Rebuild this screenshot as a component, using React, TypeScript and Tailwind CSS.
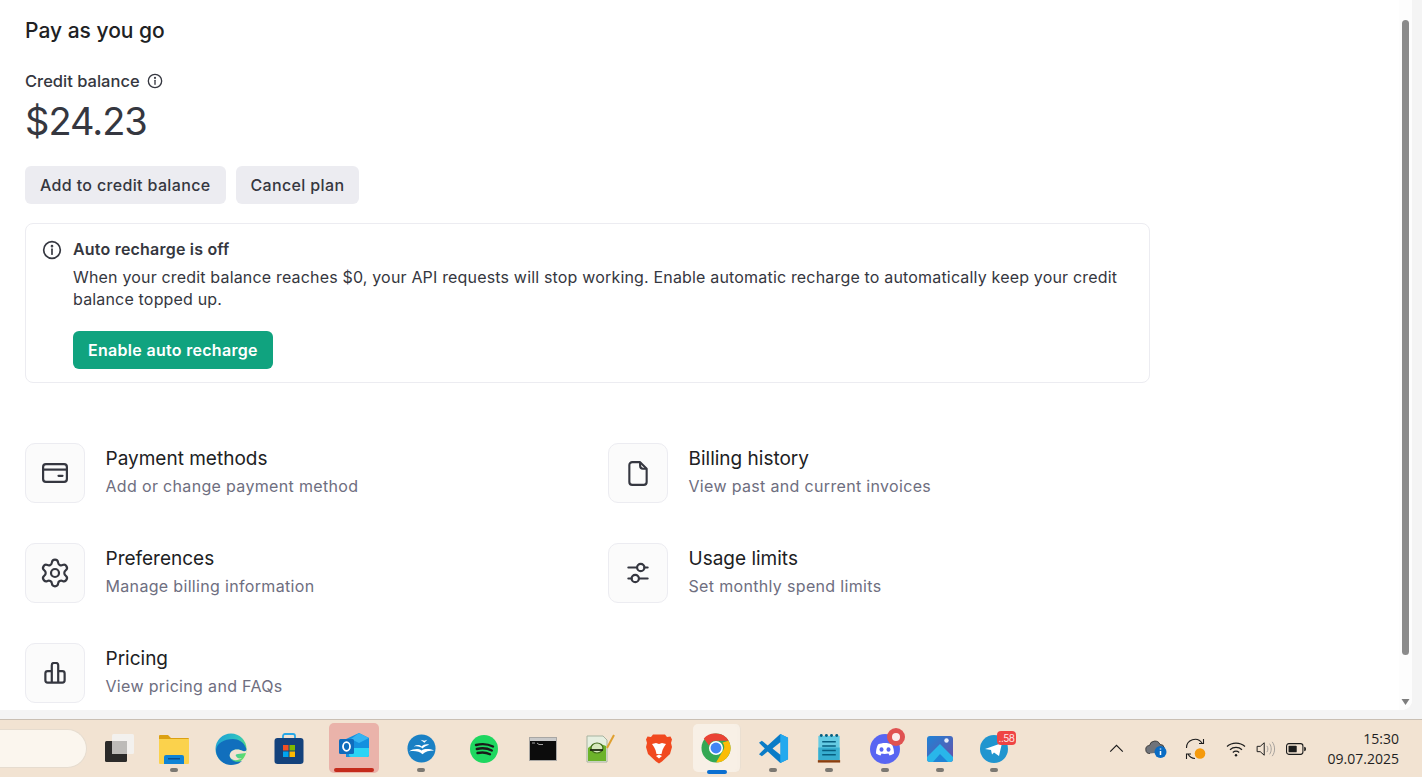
import type { ReactNode } from 'react'
import { Settings } from 'lucide-react'

const InfoIcon = ({ className }: { className: string }) => (
  <svg viewBox="0 0 24 24" fill="none" stroke="currentColor" strokeWidth="2" strokeLinecap="round" className={className}>
    <circle cx="12" cy="12" r="10" />
    <path d="M12 11v6" />
    <circle cx="12" cy="7.4" r="0.6" fill="currentColor" />
  </svg>
)

const CardIcon = () => (
  <svg viewBox="0 0 26 20" fill="none" stroke="#353740" strokeWidth="2.2" className="w-[26px] h-[20px]">
    <rect x="1.1" y="1.1" width="23.8" height="17.8" rx="2.8" />
    <path d="M1.1 6.6h23.8" />
    <path d="M16.5 12.8h4" strokeLinecap="round" />
  </svg>
)

const FileIcon = () => (
  <svg viewBox="0 0 20 26" fill="none" stroke="#353740" strokeWidth="2.2" strokeLinejoin="round" className="w-[20px] h-[25px]">
    <path d="M4 1.2h8.2L19 8v13.800a3 3 0 0 1-3 3H4a3 3 0 0 1-3-3V4.200a3 3 0 0 1 3-3z" />
    <path d="M12.200 1.200V5a3 3 0 0 0 3 3H19" />
  </svg>
)

const SlidersIcon = () => (
  <svg viewBox="0 0 24 24" fill="none" stroke="#353740" strokeWidth="2.4" strokeLinecap="round" className="w-[22px] h-[22px]">
    <path d="M1.500 6h9M19 6h3.500M1.500 18h3.500M13.500 18h9" />
    <circle cx="15" cy="6" r="4" />
    <circle cx="9" cy="18" r="4" />
  </svg>
)

const ChartIcon = () => (
  <svg viewBox="0 0 24 24" fill="none" stroke="#353740" strokeWidth="2.4" strokeLinejoin="round" className="w-[22px] h-[22px]">
    <path d="M8.500 22.500V3.500a2.500 2.500 0 0 1 2.500-2.500h2a2.500 2.500 0 0 1 2.500 2.500v19" />
    <path d="M8.500 10H4a2.500 2.500 0 0 0-2.500 2.500v7.500a2.500 2.500 0 0 0 2.500 2.500h16a2.500 2.500 0 0 0 2.500-2.500v-7.500a2.500 2.500 0 0 0-2.500-2.500h-4.500" />
  </svg>
)

function LinkItem({ icon, title, desc }: { icon: ReactNode; title: string; desc: string }) {
  return (
    <div className="flex items-center h-[60px]">
      <div className="w-[60px] h-[60px] shrink-0 flex items-center justify-center rounded-[10px] border border-[#ececf1] bg-[#fbfbfb]">
        {icon}
      </div>
      <div className="ml-[20.5px] mb-[2px]">
        <div className="text-[19px] leading-[28px] text-[#202123]">{title}</div>
        <div className="text-[16px] leading-[26px] tracking-[0.33px] text-[#6e6e80]">{desc}</div>
      </div>
    </div>
  )
}

const Dot = () => <span className="absolute left-1/2 -translate-x-1/2 bottom-[1px] w-[8px] h-[4px] rounded-full bg-[#7b7872]" />

function Slot({ className, dot, children }: { className: string; dot?: boolean; children: ReactNode }) {
  return (
    <div className={`relative h-[48px] w-[44px] shrink-0 flex items-center justify-center ${className}`}>
      {children}
      {dot && <Dot />}
    </div>
  )
}

function Taskbar() {
  return (
    <div className="h-[58px] shrink-0 border-t border-[#c9bfb3] bg-[#f2e3d2] flex items-center relative">
      <div className="w-[87px] h-[39px] shrink-0 rounded-r-[20px] bg-[#fbf6ee] border border-l-0 border-[#e6dccf] mt-[-1px]" />
      <Slot className="ml-[9px]">
        <svg viewBox="0 0 32 32" className="w-[32px] h-[32px]">
          <rect x="3" y="8" width="22" height="21" rx="1.500" fill="#2b2a29" />
          <rect x="10" y="1" width="22" height="20" rx="1.500" fill="#f3f1ee" />
          <rect x="10" y="8" width="15" height="13" fill="#bdbbb8" />
        </svg>
      </Slot>
      <Slot className="ml-[12px]" dot>
        <svg viewBox="0 0 32 32" className="w-[32px] h-[32px]">
          <path d="M1 3a1 1 0 0 1 1-1h8l3 3h17a1 1 0 0 1 1 1v3H1z" fill="#dca012" />
          <path d="M1 6h30v24a1 1 0 0 1-1 1H2a1 1 0 0 1-1-1z" fill="#fbd24c" />
          <path d="M6 31v-7a2 2 0 0 1 2-2h16a2 2 0 0 1 2 2v7z" fill="#0f84d6" />
          <rect x="10" y="25" width="12" height="1.500" fill="#0a4f8f" />
        </svg>
      </Slot>
      <Slot className="ml-[13px]">
        <svg viewBox="0 0 32 32" className="w-[32px] h-[32px]">
          <defs>
            <linearGradient id="edgeA" x1="0" y1="0" x2="1" y2="0.6">
              <stop offset="0" stopColor="#1b9bd8" />
              <stop offset="0.6" stopColor="#2fc3c0" />
              <stop offset="1" stopColor="#5fdc6a" />
            </linearGradient>
          </defs>
          <circle cx="16" cy="16" r="15.500" fill="url(#edgeA)" />
          <path d="M1 17c0 8 7 15 15 15 4 0 8-1 11-4-5 2-11 0-12-4-1-3 1-6 4-7 3-1 7 0 9 1 3 1 4-1 3-3-2-6-8-9-13-9C9 6 2 10 1 17z" fill="#116fbd" />
          <path d="M15 24c-1-3 1-6 4-7 3-1 7 0 9 1 3 1 4-1 3-3 .5 2 .5 3 0 5l-8 1c-2 0-3 1-2 2 1 2 3 3 6 2-4 3-10 3-12-1z" fill="#f2e3d2" />
        </svg>
      </Slot>
      <Slot className="ml-[14px]">
        <svg viewBox="0 0 30 32" className="w-[30px] h-[32px]">
          <path d="M9 8V3a2 2 0 0 1 2-2h8a2 2 0 0 1 2 2v5" fill="none" stroke="#28a8e8" strokeWidth="1.800" />
          <rect x="0.500" y="5" width="29" height="26" rx="3" fill="#14427c" />
          <rect x="9" y="12" width="5.500" height="5.500" fill="#f25022" />
          <rect x="15.500" y="12" width="5.500" height="5.500" fill="#7fba00" />
          <rect x="9" y="18.500" width="5.500" height="5.500" fill="#00a4ef" />
          <rect x="15.500" y="18.500" width="5.500" height="5.500" fill="#ffb900" />
        </svg>
      </Slot>
      <div className="ml-[18px] w-[50px] h-[50px] shrink-0 rounded-[5px] bg-[#eab3aa] relative flex items-center justify-center mt-[-1px]">
        <svg viewBox="0 0 32 32" className="w-[32px] h-[32px] mt-[-3px]">
          <path d="M8 8l13-6 10 5v17a2 2 0 0 1-2 2H8z" fill="#1490df" />
          <path d="M21 2l10 5-10 5-8-4z" fill="#36b3f0" />
          <path d="M11 17h20v7a2 2 0 0 1-2 2H13a2 2 0 0 1-2-2z" fill="#2bd4f5" />
          <rect x="1" y="8" width="15" height="15" rx="1.500" fill="#0f6cbd" />
          <ellipse cx="8.500" cy="15.500" rx="3.500" ry="4.300" fill="none" stroke="#ffffff" strokeWidth="1.800" />
        </svg>
        <span className="absolute left-[5px] right-[5px] bottom-[1px] h-[4px] rounded-full bg-[#c42b1c]" />
      </div>
      <Slot className="ml-[20px]" dot>
        <svg viewBox="0 0 30 30" className="w-[29px] h-[29px]">
          <circle cx="15" cy="15" r="14.500" fill="#1a80c4" />
          <path d="M2 18c5-3 10-3 13-1 3-2 8-2 13 0-5 0-9 1-12 4-3-3-8-4-14-3zM7 13c3-2 6-2 8 0 2-2 5-3 8-2-3 1-5 2-7 4-2-2-5-3-9-2zM14 6l4 1 3-1-3 3z" fill="#ffffff" />
        </svg>
      </Slot>
      <Slot className="ml-[19px]">
        <svg viewBox="0 0 28 28" className="w-[28px] h-[28px]">
          <circle cx="14" cy="14" r="14" fill="#1ed760" />
          <path d="M6 10c6-1.500 12-1 17 1.500M6.800 14c5-1.200 10.500-.8 15 1.500M7.500 18c4.500-1 9-.6 12.500 1.200" fill="none" stroke="#1a1a1a" strokeWidth="2.400" strokeLinecap="round" />
        </svg>
      </Slot>
      <Slot className="ml-[15px]">
        <svg viewBox="0 0 28 24" className="w-[28px] h-[24px]">
          <rect x="0.500" y="0.500" width="27" height="23" fill="#0c0c0c" stroke="#a9a7a4" />
          <rect x="1" y="1" width="26" height="3" fill="#c9c9c9" />
          <path d="M3 6h3M8 6l2 1.500H14" stroke="#c8c8c8" strokeWidth="0.800" fill="none" />
        </svg>
      </Slot>
      <Slot className="ml-[13px]">
        <svg viewBox="0 0 30 30" className="w-[30px] h-[30px]">
          <path d="M2 2h16l4 4v22H2z" fill="#e6efe0" stroke="#a7b3a0" />
          <path d="M3 14c4-4 12-5 18-2v15H3z" fill="#6cb32a" />
          <ellipse cx="12" cy="14" rx="6" ry="5" fill="#d5e8bd" stroke="#3f6a1a" strokeWidth="1.200" />
          <path d="M5 16h13" stroke="#1c2a10" strokeWidth="1.800" />
          <path d="M22 14L29 1" stroke="#e0a030" strokeWidth="2" />
        </svg>
      </Slot>
      <Slot className="ml-[15px]">
        <svg viewBox="0 0 26 30" className="w-[26px] h-[30px]">
          <path d="M7 0.500h12l2 2.500 3.500-.5 1.500 3-1 3.500 1 4-2 7-8 7.500-3 2-3-2-8-7.500-2-7 1-4-1-3.500 1.500-3 3.500.5z" fill="#f1491f" />
          <path d="M6 10l4-1 3 1 3-1 4 1-2 3-1.500 3-1 4h-5l-1-4-1.500-3zM10 22l3-1.500 3 1.500-3 2.500z" fill="#ffffff" />
        </svg>
      </Slot>
      <div className="ml-[12px] relative w-[44px] h-[48px] shrink-0 mt-[-1px]">
        <div className="absolute left-[38px] top-0 w-[10px] h-[48px] rounded-r-[5px] bg-[#f7efe5] border-r border-[#eadfd1]" />
        <div className="absolute inset-0 rounded-[5px] bg-[#f8f0e6] flex items-center justify-center">
          <svg viewBox="0 0 32 32" className="w-[30px] h-[30px] ml-[2px]">
            <circle cx="16" cy="16" r="15.500" fill="#34a853" />
            <path d="M16 .5a15.500 15.500 0 0 1 13.400 7.700H16a8 8 0 0 0-7.500 5L3 5.800A15.500 15.500 0 0 1 16 .5z" fill="#ea4335" />
            <path d="M29.400 8.200A15.500 15.500 0 0 1 16 31.500l6.700-11.600A8 8 0 0 0 23 10l6.400-1.800z" fill="#fbbc05" />
            <circle cx="16" cy="16" r="7.500" fill="#ffffff" />
            <circle cx="16" cy="16" r="5.800" fill="#4285f4" />
          </svg>
        </div>
        <span className="absolute left-[14px] bottom-[-2px] w-[20px] h-[4px] rounded-full bg-[#0b6fd0]" />
      </div>
      <Slot className="ml-[14px]" dot>
        <svg viewBox="0 0 32 32" className="w-[31px] h-[31px]">
          <path d="M23 1l8 4v22l-8 4-13-12-6 5-3-2 6-6-6-6 3-2 6 5z" fill="#0a7cc7" />
          <path d="M23 1l8 4v22l-8 4z" fill="#24a9ee" />
          <path d="M23 9.500v13l-8-6.500z" fill="#f2e3d2" />
        </svg>
      </Slot>
      <Slot className="ml-[12px]" dot>
        <svg viewBox="0 0 24 32" className="w-[24px] h-[31px]">
          <rect x="1" y="3" width="22" height="25" fill="#65cbe3" />
          <rect x="1" y="15" width="22" height="13" fill="#37aed0" />
          <rect x="0.500" y="28" width="23" height="2.500" fill="#8a3f0f" />
          <path d="M5 9h14M5 13.500h14M5 18h14M5 22.500h14" stroke="#075f80" strokeWidth="1.600" />
          <circle cx="4" cy="2.500" r="1.500" fill="#075f80" />
          <circle cx="9.300" cy="2.500" r="1.500" fill="#075f80" />
          <circle cx="14.600" cy="2.500" r="1.500" fill="#075f80" />
          <circle cx="20" cy="2.500" r="1.500" fill="#075f80" />
        </svg>
      </Slot>
      <Slot className="ml-[12px]" dot>
        <svg viewBox="0 0 30 30" className="w-[30px] h-[30px]">
          <circle cx="15" cy="15" r="15" fill="#5865f2" />
          <path d="M8 10.500c4-2 10-2 14 0 1.500 3 2 6 2 9-1.500 1-3 1.700-4.500 2l-1-2c-2.500.6-5.500.6-7 0l-1 2c-1.500-.3-3-1-4.500-2 0-3 .5-6 2-9z" fill="#ffffff" />
          <ellipse cx="11.500" cy="15.500" rx="2" ry="2.300" fill="#5865f2" />
          <ellipse cx="18.500" cy="15.500" rx="2" ry="2.300" fill="#5865f2" />
        </svg>
        <span className="absolute left-[24px] top-[3px] w-[18px] h-[18px] rounded-full bg-[#e05252] flex items-center justify-center">
          <span className="w-[8px] h-[8px] rounded-full bg-[#fbeeee]" />
        </span>
      </Slot>
      <Slot className="ml-[11px]" dot>
        <svg viewBox="0 0 26 26" className="w-[26px] h-[26px]">
          <defs>
            <linearGradient id="photoBg" x1="0" y1="0" x2="1" y2="1">
              <stop offset="0" stopColor="#1f83d6" />
              <stop offset="1" stopColor="#6a4fa8" />
            </linearGradient>
          </defs>
          <rect width="26" height="26" rx="3" fill="url(#photoBg)" />
          <path d="M0 21l13-13 13 13v2a3 3 0 0 1-3 3H3a3 3 0 0 1-3-3z" fill="#29b6ea" />
          <path d="M6 26l7-8 8 8z" fill="#1f83d6" />
          <circle cx="19.500" cy="4.500" r="2.200" fill="#e8eef8" />
        </svg>
      </Slot>
      <Slot className="ml-[10px]" dot>
        <svg viewBox="0 0 28 28" className="w-[28px] h-[28px]">
          <circle cx="14" cy="14" r="14" fill="#2095cf" />
          <path d="M5 14l17-6-3 13-5-3.500-2 2-1-4.500z" fill="#ffffff" />
        </svg>
        <span className="absolute left-[25px] top-[6px] w-[19px] h-[14px] rounded-[4px] bg-[#ef4444] text-center text-[#fde8e8] text-[10px] leading-[14px] tracking-[-0.5px] font-['Inter',sans-serif]">..58</span>
      </Slot>

      {/* system tray */}
      <div className="ml-auto flex items-center pr-[23px] text-[#1c1c1c]">
        <svg viewBox="0 0 16 10" fill="none" stroke="#1c1c1c" strokeWidth="1.300" className="w-[15px] h-[9px]">
          <path d="M1 8.500L8 1.500l7 7" />
        </svg>
        <svg viewBox="0 0 22 20" className="ml-[21px] w-[22px] h-[20px]">
          <path d="M5 14.500a4 4 0 0 1-.5-8A5.500 5.500 0 0 1 15 5.500a4 4 0 0 1 1.500 7.800" fill="#6f737a" stroke="#2c2c2c" strokeWidth="0.800" />
          <circle cx="15.500" cy="13" r="6" fill="#0a6cc4" />
          <path d="M15.500 12v4M15.500 9.500v1" stroke="#fff" strokeWidth="1.500" />
        </svg>
        <svg viewBox="0 0 22 22" className="ml-[18px] w-[22px] h-[22px]" fill="none" stroke="#1c1c1c" strokeWidth="1.100">
          <path d="M1.500 10A8.500 8.500 0 0 1 17 5M18.500 1v4.500H14" />
          <path d="M10 20.500A8.500 8.500 0 0 1 3 16M1.500 21v-5H6" />
          <circle cx="15" cy="15.500" r="5.300" fill="#f59a0c" stroke="none" />
        </svg>
        <svg viewBox="0 0 20 16" fill="none" stroke="#1c1c1c" strokeWidth="1.200" className="ml-[19px] w-[20px] h-[16px]">
          <path d="M1 5.500c5-4.500 13-4.500 18 0M4 8.700c3.300-3 8.700-3 12 0M6.800 11.500c1.800-1.500 4.600-1.500 6.400 0" />
          <circle cx="10" cy="14.200" r="1.200" fill="#1c1c1c" stroke="none" />
        </svg>
        <svg viewBox="0 0 22 18" fill="none" strokeWidth="1" className="ml-[10px] w-[20px] h-[16px]">
          <path d="M1 6h3.500L9 2v14l-4.500-4H1z" stroke="#1c1c1c" strokeWidth="1.100" />
          <path d="M12 5.500c1.500 2 1.500 5 0 7M15 3c2.500 3.500 2.500 8.500 0 12M18 1c3.500 4.500 3.500 11.500 0 16" stroke="#9d9a96" />
        </svg>
        <svg viewBox="0 0 22 13" className="ml-[10px] w-[20px] h-[12px]">
          <rect x="0.600" y="0.600" width="18" height="11.800" rx="2.500" fill="none" stroke="#1c1c1c" strokeWidth="1.200" />
          <rect x="2.800" y="2.800" width="9" height="7.400" rx="1" fill="#1c1c1c" />
          <path d="M20 4v5c1 0 2-1 2-2.500S21 4 20 4z" fill="#1c1c1c" />
        </svg>
        <div className="ml-[21px] w-[72px] text-right text-[14px] leading-[20px] font-['Open_Sans',sans-serif] text-[#1f1f1f]">
          <div>15:30</div>
          <div>09.07.2025</div>
        </div>
      </div>
    </div>
  )
}

export default function App() {
  return (
    <div className="w-[1422px] h-[777px] flex flex-col overflow-hidden bg-[#f4f4f4] font-['Inter',sans-serif]">
      <div className="h-[710px] shrink-0 flex">
        <div className="w-[1412px] h-[710px] bg-white rounded-br-[10px] flex overflow-hidden">
          <main className="w-[1399px] pl-[25px] pt-[17px] overflow-hidden">
            <h1 className="text-[21px] leading-[28px] font-medium text-[#202123]">Pay as you go</h1>
            <div className="mt-[24px] flex items-center h-[24px]">
              <span className="text-[16.5px] font-medium text-[#353740]">Credit balance</span>
              <InfoIcon className="ml-[7px] w-[16px] h-[16px] text-[#353740]" />
            </div>
            <div className="mt-[3px] text-[38px] leading-[50px] tracking-[-1px] text-[#353740]">$24.23</div>
            <div className="mt-[20px] flex gap-[10px]">
              <button className="h-[38px] px-[15px] rounded-[6px] bg-[#ececf1] text-[16px] tracking-[0.35px] font-medium text-[#353740]">Add to credit balance</button>
              <button className="h-[38px] px-[15px] rounded-[6px] bg-[#ececf1] text-[16px] tracking-[0.35px] font-medium text-[#353740]">Cancel plan</button>
            </div>
            <section className="mt-[19px] w-[1125px] h-[160px] rounded-[8px] border border-[#ececf1] pl-[16px] pt-[14px] flex">
              <InfoIcon className="w-[20px] h-[20px] mt-[2px] ml-[-0.5px] text-[#353740] shrink-0" />
              <div className="ml-[11.5px] w-[1060px]">
                <div className="text-[16px] leading-[22px] tracking-[0.2px] font-semibold text-[#353740]">Auto recharge is off</div>
                <p className="mt-[6px] text-[16px] leading-[22px] tracking-[0.175px] text-[#353740]">
                  When your credit balance reaches $0, your API requests will stop working. Enable automatic recharge to automatically keep your credit balance topped up.
                </p>
                <button className="mt-[21px] h-[38px] px-[15px] rounded-[6px] bg-[#10a37f] text-[16px] tracking-[0.3px] font-semibold text-white">Enable auto recharge</button>
              </div>
            </section>
            <div className="mt-[60px] w-[1125px] grid grid-cols-[583px_1fr] gap-y-[40px]">
              <LinkItem icon={<CardIcon />} title="Payment methods" desc="Add or change payment method" />
              <LinkItem icon={<FileIcon />} title="Billing history" desc="View past and current invoices" />
              <LinkItem icon={<Settings size={32} color="#353740" strokeWidth={1.65} />} title="Preferences" desc="Manage billing information" />
              <LinkItem icon={<SlidersIcon />} title="Usage limits" desc="Set monthly spend limits" />
              <LinkItem icon={<ChartIcon />} title="Pricing" desc="View pricing and FAQs" />
            </div>
          </main>
          <div className="w-[13px] bg-[#fdfdfd] flex flex-col items-center">
            <div className="mt-[20px] w-[7px] h-[635px] rounded-full bg-[#8b8b8b]" />
            <svg viewBox="0 0 8 6" className="mt-[44px] w-[9px] h-[6px]">
              <path d="M0 0h8L4 6z" fill="#7d7d7d" />
            </svg>
          </div>
        </div>
      </div>
      <div className="h-[9px] shrink-0" />
      <Taskbar />
    </div>
  )
}
